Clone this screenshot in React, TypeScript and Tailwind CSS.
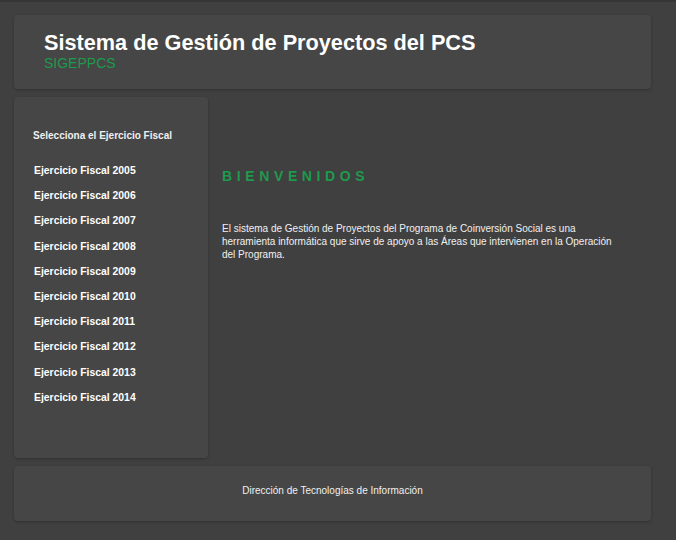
export default function App() {
  const years = [2005, 2006, 2007, 2008, 2009, 2010, 2011, 2012, 2013, 2014];

  return (
    <div
      className="min-h-[540px] bg-[#404040] border-t-2 border-[#363636] pt-[13px] pl-[14px] pr-[25px] pb-5 text-white"
      style={{ fontFamily: '"Liberation Sans", Arial, sans-serif' }}
    >
      {/* Header */}
      <div className="h-[74px] rounded bg-[#464646] shadow-[0_1px_3px_rgba(0,0,0,0.25)] pl-[30px] pt-[15px]">
        <h1 className="text-[21.7px] font-bold leading-[26px] text-white">Sistema de Gestión de Proyectos del PCS</h1>
        <p className="text-[14px] leading-[14px] text-[#1d9a4c]">SIGEPPCS</p>
      </div>

      <div className="mt-[8px] flex">
        {/* Sidebar */}
        <div className="h-[361px] w-[194px] shrink-0 rounded bg-[#464646] shadow-[0_1px_3px_rgba(0,0,0,0.25)] pl-[19px] pt-[32px]">
          <p className="text-[10px] font-bold leading-[14px] text-[#f0f0f0]">Selecciona el Ejercicio Fiscal</p>
          <ul className="mt-[21px] pl-px">
            {years.map((y) => (
              <li key={y} className="h-[25.2px] text-[10.4px] font-bold leading-[14px] text-white">
                Ejercicio Fiscal {y}
              </li>
            ))}
          </ul>
        </div>

        {/* Content */}
        <div className="pl-[14px] pt-[70px] pr-[30px]">
          <h2 className="text-[14px] font-bold leading-[18px] tracking-[0.33em] text-[#1d9a4c]">BIENVENIDOS</h2>
          <p className="mt-[37px] w-[392px] text-[10px] leading-[13px] text-[#f0f0f0]">
            El sistema de Gestión de Proyectos del Programa de Coinversión Social es una herramienta informática que sirve de apoyo a las Áreas que intervienen en la Operación del Programa.
          </p>
        </div>
      </div>

      {/* Footer */}
      <div className="mt-[8px] flex h-[55px] items-center justify-center rounded bg-[#464646] pb-[5px] shadow-[0_1px_3px_rgba(0,0,0,0.25)]">
        <p className="text-[10px] leading-[14px] text-[#f0f0f0]">Dirección de Tecnologías de Información</p>
      </div>
    </div>
  );
}
